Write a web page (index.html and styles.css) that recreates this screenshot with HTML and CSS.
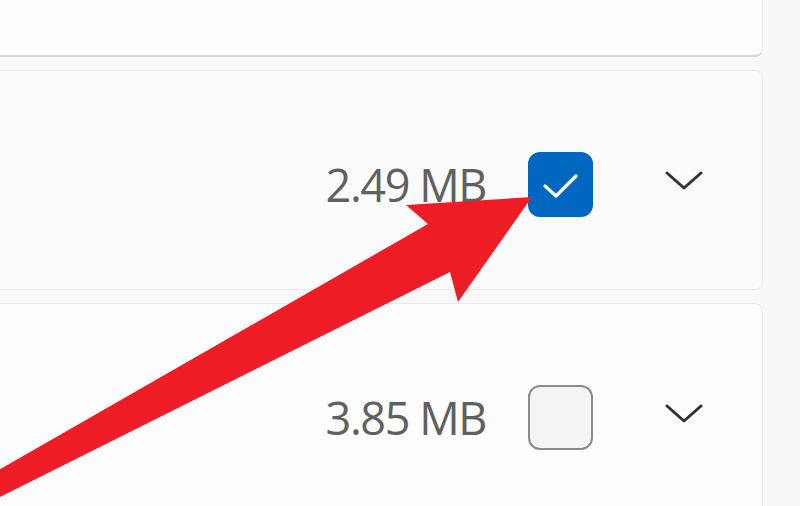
FILE: index.html
```html
<!DOCTYPE html>
<html>
  <head>
    <link rel="stylesheet" href="styles.css">
  </head>
  <body>
    <div class="page">
      <div class="cleanup-list">
        <div class="cleanup-item header-item"></div>

        <div class="cleanup-item shaded">
          <div class="item-size">2.49 MB</div>
          <div class="check checked">
            <svg viewBox="0 0 64 64" width="64" height="64">
              <path d="M16 34 L27 44 L47 24" fill="none" stroke="#fff" stroke-width="3.2" stroke-linecap="round" stroke-linejoin="round"/>
            </svg>
          </div>
          <div class="expander">
            <svg viewBox="0 0 40 20" width="40" height="20">
              <path d="M3 3 L20 18 L37 3" fill="none" stroke="#333" stroke-width="3" stroke-linecap="round" stroke-linejoin="round"/>
            </svg>
          </div>
        </div>

        <div class="cleanup-item">
          <div class="item-size">3.85 MB</div>
          <div class="check"></div>
          <div class="expander">
            <svg viewBox="0 0 40 20" width="40" height="20">
              <path d="M3 3 L20 18 L37 3" fill="none" stroke="#333" stroke-width="3" stroke-linecap="round" stroke-linejoin="round"/>
            </svg>
          </div>
        </div>
      </div>

      <!-- annotation arrow drawn over the screenshot -->
      <svg class="annotation" viewBox="0 0 800 506" width="800" height="506">
        <polygon fill="#ee1c25"
          points="-10,475 428,224 406,205 532,197 458,302 450,272 -10,502"/>
      </svg>
    </div>
  </body>
</html>
```

FILE: styles.css
```css
* {
  box-sizing: border-box;
}
:root {
  font-family: "Open Sans", "Noto Sans", sans-serif;
}
body {
  margin: 0;
  background-color: #f8f8f8;
  overflow: hidden;
}
.page {
  position: relative;
  width: 800px;
  height: 506px;
  overflow: hidden;
}
.cleanup-list {
  display: flex;
  flex-direction: column;
  gap: 13px;
  width: 803px;
  margin: -163px 0 0 -40px;
}
.cleanup-item {
  height: 220px;
  display: flex;
  align-items: center;
  justify-content: flex-end;
  padding: 8px 48px 0 0;
  background-color: #fdfdfd;
  border: 1px solid #e9e9e9;
  border-radius: 8px;
}
.header-item {
  background-color: #fefefe;
  border-bottom: 2px solid #d6d6d6;
}
.shaded {
  background-color: #fbfbfb;
}
.item-size {
  font-size: 45px;
  letter-spacing: -1.4px;
  color: #606060;
  margin-right: 42px;
  line-height: 1;
}
.check {
  width: 65px;
  height: 65px;
  border-radius: 12px;
  border: 2.5px solid #8b8b8b;
  background-color: #f4f4f4;
  margin-right: 61px;
  display: flex;
  align-items: center;
  justify-content: center;
}
.check.checked {
  border: none;
  background-color: #0067c0;
}
.expander {
  width: 60px;
  height: 60px;
  display: flex;
  align-items: center;
  justify-content: center;
  margin-top: -8px;
}
.annotation {
  position: absolute;
  left: 0;
  top: 0;
  pointer-events: none;
}
```
